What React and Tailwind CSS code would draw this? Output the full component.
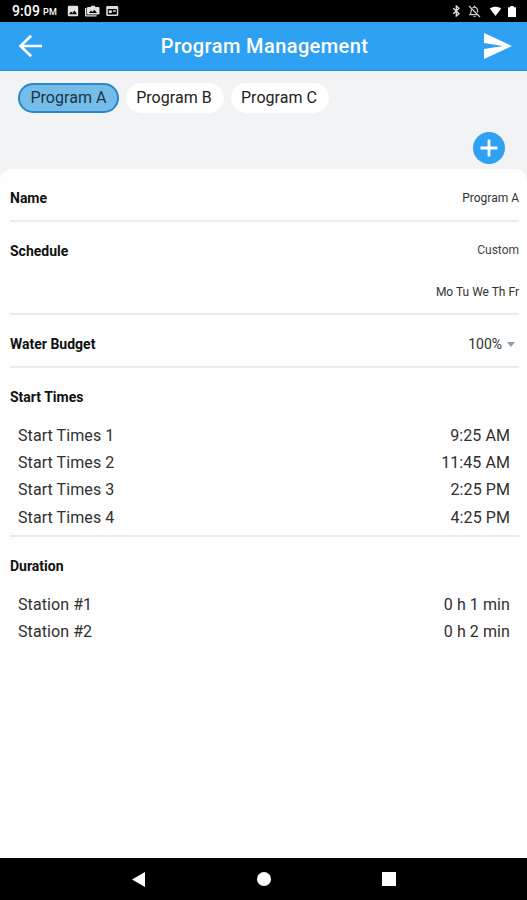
import React from 'react'
import clsx from 'clsx'

const programs = ['Program A', 'Program B', 'Program C']

const startTimes = [
    { label: 'Start Times 1', value: '9:25 AM' },
    { label: 'Start Times 2', value: '11:45 AM' },
    { label: 'Start Times 3', value: '2:25 PM' },
    { label: 'Start Times 4', value: '4:25 PM' }
]

const durations = [
    { label: 'Station #1', value: '0 h 1 min' },
    { label: 'Station #2', value: '0 h 2 min' }
]

const StatusBar = () => (
    <div className="flex h-[22px] items-center justify-between bg-black pl-3 pr-[11px] text-white">
        <div className="flex items-center">
            <span className="text-[14px] font-medium leading-[22px] tracking-[0.1px]">9:09</span>
            <span className="ml-[3px] mt-[3px] text-[9px] font-medium leading-none tracking-[0.3px]">PM</span>
            <svg className="ml-[10px]" width="12" height="12" viewBox="0 0 12 12" fill="#e4e4e4">
                <path fillRule="evenodd" d="M2 .8h8a1.2 1.2 0 0 1 1.2 1.2v8a1.2 1.2 0 0 1-1.2 1.2H2A1.2 1.2 0 0 1 .8 10V2A1.2 1.2 0 0 1 2 .8ZM2 9.2h8L7.4 5.6 5.4 8 4 6.6Z" />
            </svg>
            <svg className="ml-[6px]" width="15" height="12" viewBox="0 0 15 12" fill="#e4e4e4">
                <path d="M0 3h1.4v7.2h10.2v1.4H1A1 1 0 0 1 0 10.6Z" />
                <path fillRule="evenodd" d="M3 2h2.5L6.5 .8h3L10.5 2h3a1 1 0 0 1 1 1v5.6a1 1 0 0 1-1 1H3a1 1 0 0 1-1-1V3a1 1 0 0 1 1-1ZM4 8h8L9.4 4.8 7.4 7 6 5.6Z" />
            </svg>
            <svg className="ml-[6px]" width="13" height="12" viewBox="0 0 13 12" fill="#dcdcdc">
                <path fillRule="evenodd" d="M1.5 1H11a1.3 1.3 0 0 1 1.3 1.3v7.4A1.3 1.3 0 0 1 11 11H1.5A1.3 1.3 0 0 1 .2 9.7V2.300A1.3 1.3 0 0 1 1.5 1ZM1.800 4v5.400h9V4ZM2.800 5.300h3V8h-3ZM7 5.300h2.800v1.500H7Z" />
            </svg>
        </div>
        <div className="flex items-center">
            <svg width="9" height="12" viewBox="0 0 9 12" fill="none" stroke="#e4e4e4" strokeWidth="1.300">
                <path d="M1.300 3.300 7 8.700 4.300 11V1L7 3.300 1.300 8.700" />
            </svg>
            <svg className="ml-[7px]" width="13" height="13" viewBox="0 0 13 13" fill="none" stroke="#cfcfcf" strokeWidth="1.200">
                <path d="M1 1l11 11M3.400 4.500C3 6 3.400 8 2 9.700h7.500M4.600 2.900C6 1.500 9.400 2 9.500 5.200V7.600M6.500 .6v1.500M5.500 11.500h2" />
            </svg>
            <svg className="ml-[8px]" width="13" height="10" viewBox="0 0 13 10" fill="#ffffff">
                <path d="M6.500 10 .8 2.500C4 .2 9 .2 12.200 2.500Z" />
            </svg>
            <svg className="ml-[6px]" width="8" height="11" viewBox="0 0 8 11" fill="#ffffff">
                <path d="M0 1.200h2.300V0h3.400v1.200H8V11H0Z" />
            </svg>
        </div>
    </div>
)

const Header = () => (
    <header className="flex h-[49px] items-center justify-between border-b border-[#2b8fd6] bg-[#2fa1f3] pl-[18px] pr-[15px] text-white">
        <svg width="25" height="24" viewBox="0 0 25 24" fill="none" stroke="currentColor" strokeWidth="2.700">
            <path d="M24 12H2.500M13.200 1.800 2.500 12l10.700 10.200" />
        </svg>
        <h1 className="pl-[2px] text-[20px] font-medium leading-none tracking-[0.4px]">Program Management</h1>
        <svg width="28" height="26" viewBox="0 0 28 26" fill="currentColor">
            <path d="M0 0 28 13 0 26V16l19-3L0 10Z" />
        </svg>
    </header>
)

const Chip = ({ label, active }) => (
    <button
        className={clsx(
            'flex h-[30px] items-center justify-center rounded-full pb-px text-[16px] tracking-[0.05px]',
            active
                ? 'w-[101px] border-2 border-[#2787cf] bg-[#75bde8] text-[#1c3444]'
                : 'w-[98px] bg-white pr-[2px] text-[#222222]'
        )}
    >
        {label}
    </button>
)

const Section = ({ title, children }) => (
    <section className="ml-[10px] mr-[8px] border-b-2 border-[#e9ebec]">
        <div className="flex justify-between">
            <h2 className="pt-[19px] text-[14px] font-bold leading-[21px] text-[#111111]">{title}</h2>
            {children}
        </div>
    </section>
)

const ListSection = ({ title, items, last }) => (
    <section className={clsx('ml-[10px] mr-[8px]', !last && 'border-b-2 border-[#e9ebec] pb-[4px]')}>
        <h2 className="pb-[15px] pt-[19px] text-[14px] font-bold leading-5 text-[#111111]">{title}</h2>
        {items.map((item) => (
            <div key={item.label} className="flex h-[27.300px] items-center justify-between pl-2 pr-[9px] text-[16px] tracking-[0.08px] text-[#303030]">
                <span>{item.label}</span>
                <span>{item.value}</span>
            </div>
        ))}
    </section>
)

const NavBar = () => (
    <nav className="flex h-[42px] items-center justify-between bg-black pl-[132px] pr-[131px]">
        <svg width="13" height="15" viewBox="0 0 13 15" fill="#ffffff"><path d="M0 7.500 13 0V15Z" /></svg>
        <span className="h-[14px] w-[14px] rounded-full bg-white" />
        <span className="h-[14px] w-[14px] bg-white" />
    </nav>
)

const App = () => (
    <div className="flex h-[900px] w-[527px] flex-col overflow-hidden bg-[#f1f3f5] font-['Roboto',sans-serif]">
        <StatusBar />
        <Header />
        <div className="h-[98px] shrink-0 pt-3">
            <div className="flex gap-[7px] pl-[18px]">
                {programs.map((name, i) => <Chip key={name} label={name} active={i === 0} />)}
            </div>
            <div className="flex justify-end pr-[22px] pt-[19px]">
                <button className="flex h-8 w-8 items-center justify-center rounded-full bg-[#2fa1f3]">
                    <svg width="18" height="18" viewBox="0 0 18 18" stroke="#ffffff" strokeWidth="2.800"><path d="M9 .5v17M.5 9h17" /></svg>
                </button>
            </div>
        </div>
        <main className="flex-1 rounded-t-[12px] bg-[#fefefe]">
            <Section title="Name">
                <div className="h-[51px] pt-[19px] text-[12px] leading-[21px] text-[#333333]">Program A</div>
            </Section>
            <Section title="Schedule">
                <div className="h-[91px] pt-[18px] text-right text-[12px] leading-[21px] text-[#444444]">
                    <p>Custom</p>
                    <p className="pt-[21px] text-[#333333]">Mo Tu We Th Fr</p>
                </div>
            </Section>
            <Section title="Water Budget">
                <div className="flex h-[51px] items-center pr-[4px] pt-[8px] text-[14px] text-[#333333]">
                    <span>100%</span>
                    <svg className="ml-[5px]" width="8" height="5" viewBox="0 0 8 5" fill="#999999"><path d="M0 0h8L4 5Z" /></svg>
                </div>
            </Section>
            <ListSection title="Start Times" items={startTimes} />
            <ListSection title="Duration" items={durations} last />
        </main>
        <NavBar />
    </div>
)

export default App
